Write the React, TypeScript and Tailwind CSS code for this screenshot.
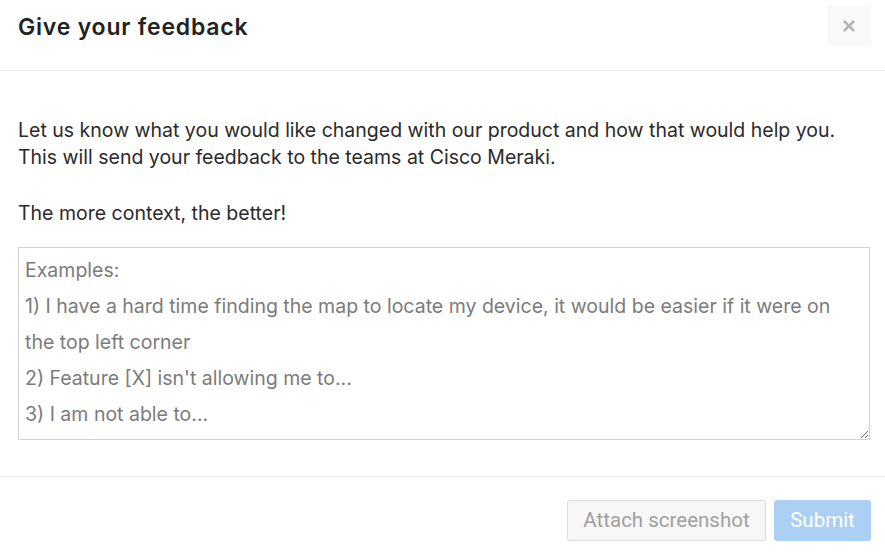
import React from "react";

export default function App() {
  const placeholder =
    "Examples:\n1) I have a hard time finding the map to locate my device, it would be easier if it were on the top left corner\n2) Feature [X] isn't allowing me to...\n3) I am not able to...";
  return (
    <div className="w-[885px] h-[553px] bg-white overflow-hidden flex flex-col" style={{ fontFamily: "Inter, sans-serif" }}>
      <div className="h-[71px] flex items-start justify-between border-b border-[#ebebeb] pl-[18px] pr-[14px]">
        <h1 className="mt-[12px] text-[23px] font-semibold text-[#222] leading-[30px] tracking-[0.8px]" style={{ fontFamily: "Inter, sans-serif" }}>
          Give your feedback
        </h1>
        <button className="mt-[5px] w-[44px] h-[41px] bg-[#f9f9f9] flex items-center justify-center">
          <svg width="14" height="14" viewBox="0 0 14 14">
            <path d="M2 2 L12 12 M12 2 L2 12" stroke="#b5b5b5" strokeWidth="2.6" strokeLinecap="butt" />
          </svg>
        </button>
      </div>
      <div className="px-[18px] pt-[46px] h-[406px] border-b border-[#ebebeb]">
        <p className="text-[19.5px] leading-[27px] text-[#2a2a2a]">
          Let us know what you would like changed with our product and how that would help you.
          <br />
          This will send your feedback to the teams at Cisco Meraki.
        </p>
        <p className="mt-[29px] text-[19.5px] leading-[27px] text-[#2a2a2a]">The more context, the better!</p>
        <textarea
          className="mt-[20px] block w-[852px] h-[193px] border border-[#d4d4d4] px-[6px] py-[4px] text-[19.5px] leading-[36px] text-[#222] placeholder:text-[#7b7b7b] outline-none"
          placeholder={placeholder}
        />
      </div>
      <div className="flex justify-end gap-[8px] pr-[14px] pt-[23px]" style={{ fontFamily: "Roboto, sans-serif" }}>
        <button className="h-[41px] w-[199px] rounded-[3px] border border-[#dcdcdc] bg-[#f7f7f7] text-[20.5px] text-[#a0a0a0]">
          Attach screenshot
        </button>
        <button className="h-[41px] w-[97px] rounded-[3px] bg-[#acd0f3] text-[20.5px] text-white">Submit</button>
      </div>
    </div>
  );
}
